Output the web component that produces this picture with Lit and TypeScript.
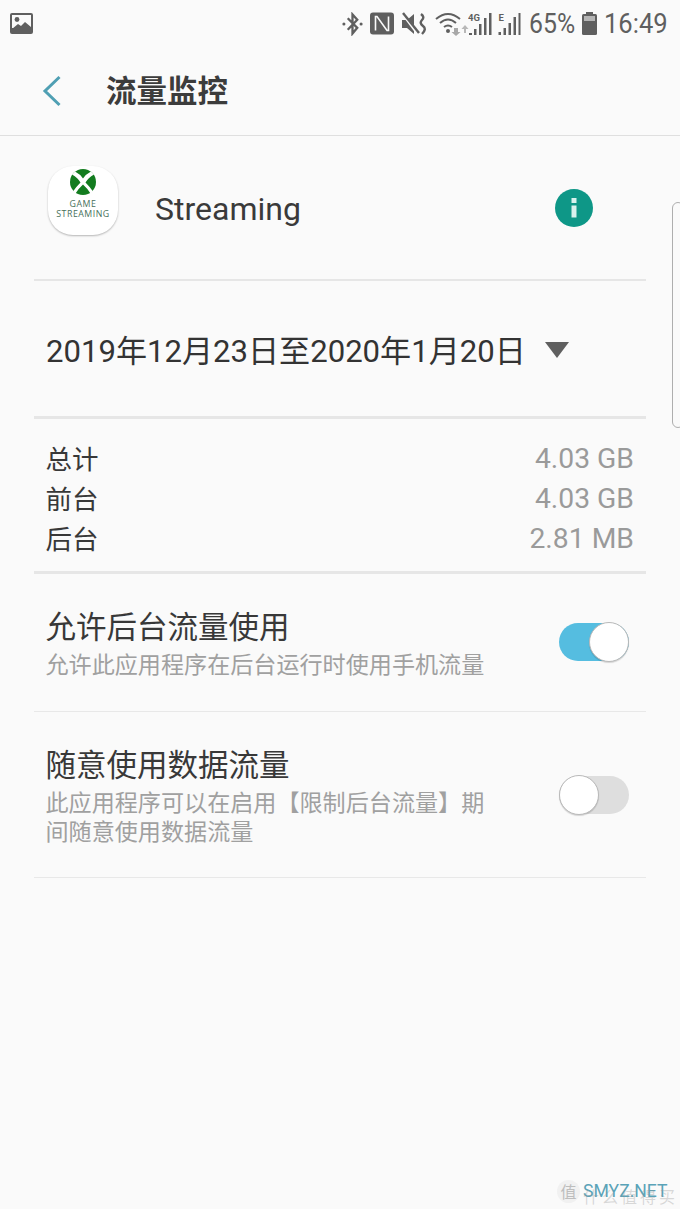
import { LitElement, html, css } from "lit";
import { customElement } from "lit/decorators.js";

@customElement("app-root")
export class AppRoot extends LitElement {
  static styles = css`
    :host { display: block; width: 680px; height: 1209px; background: #fafafa; position: relative; overflow: hidden;
      font-family: Roboto, "Noto Sans CJK SC", sans-serif; color: #333; }
    .status { height: 46px; display: flex; align-items: center; padding: 1px 14px 0 10px; box-sizing: border-box; color: #5f5f5f; }
    .status svg { display: block; flex: none; }
    .spacer { flex: 1; }
    .pct { font-size: 27px; margin-left: 8px; width: 45px; line-height: 46px; display: inline-block; transform: scaleX(.92); transform-origin: left; white-space: nowrap; }
    .bat { margin-left: 8px; }
    .time { font-size: 27.5px; margin-left: 7px; width: 62px; line-height: 46px; display: inline-block; transform: scaleX(.93); transform-origin: left; white-space: nowrap; }
    .icons { display: flex; align-items: center; }
    .head { height: 89px; border-bottom: 1px solid #dfdfdf; display: flex; align-items: center; padding-left: 42px; }
    .head h1 { margin: 0 0 4px 44px; font-size: 30.5px; font-weight: 700; color: #3c3c3c; }
    .body { padding: 0 34px; }
    .app { height: 145px; border-bottom: 2px solid #e6e6e6; display: flex; align-items: center; padding-left: 14px; box-sizing: border-box; }
    .tile { width: 70px; height: 69px; border-radius: 25px; background: #fff; box-shadow: 0 1px 2px rgba(0,0,0,.28); display: flex; flex-direction: column; align-items: center; margin-bottom: 15px; }
    .tile svg { margin-top: 3px; }
    .tile span { font-size: 8.8px; line-height: 10px; color: #47705a; letter-spacing: .5px; white-space: nowrap; font-family: "Open Sans", sans-serif; }
    .tile span:first-of-type { margin-top: 4px; }
    .name { margin-left: 37px; font-size: 32px; color: #3a3a3a; flex: 1; margin-top: 3px; }
    .info { width: 38px; height: 38px; border-radius: 50%; background: #0e9787; margin-right: 53px; display: flex; align-items: center; justify-content: center; margin-top: 1px; }
    .date { height: 138px; border-bottom: 3px solid #e6e6e6; display: flex; align-items: center; padding-left: 12px; box-sizing: border-box; font-size: 31.1px; color: #333; }
    .tri { width: 0; height: 0; border-left: 12.5px solid transparent; border-right: 12.5px solid transparent; border-top: 16px solid #5f5f5f; margin-left: 19px; margin-top: 2px; }
    .stats { padding: 19px 12px 13px 11.5px; border-bottom: 3px solid #e6e6e6; }
    .stat { height: 40px; display: flex; justify-content: space-between; align-items: center; font-size: 26.5px; color: #383838; }
    .stat span { margin-bottom: 2px; }
    .stat b { font-weight: 400; font-size: 28.3px; color: #9a9a9a; }
    .row { border-bottom: 1px solid #e8e8e8; display: flex; justify-content: space-between; padding: 0 17px 0 11.5px; box-sizing: border-box; }
    .row.a { height: 138px; padding-top: 34px; }
    .row.b { height: 166px; padding-top: 34px; }
    .t { font-size: 30.5px; line-height: 40px; color: #383838; }
    .s { font-size: 23.1px; line-height: 29px; color: #a0a0a0; width: 445px; margin-top: 3px; }
    .sw { width: 70px; height: 38px; border-radius: 19px; position: relative; margin-top: 15px; }
    .sw.on { background: #55bde0; }
    .sw.off { background: #dedede; margin-top: 30px; }
    .knob { position: absolute; top: -1px; width: 38px; height: 38px; border-radius: 50%; background: #fff; border: 1px solid #b9b9b9; box-shadow: 0 1px 1px rgba(0,0,0,.15); }
    .on .knob { right: 0; }
    .off .knob { left: 0; }
    .edge { position: absolute; left: 672px; top: 202px; width: 12px; height: 226px; border: 1px solid #aeaeae; border-radius: 8px; box-sizing: border-box; }
    .mark { position: absolute; left: 557px; top: 1179px; display: flex; align-items: center; }
    .mark i { width: 23px; height: 23px; border-radius: 50%; background: #f1f1f1; font-style: normal; font-size: 16px; color: #bdbdbd; display: flex; align-items: center; justify-content: center; }
    .mark span { font-size: 17.6px; color: #5aa3b8; margin-left: 3px; line-height: 24px; }
    .mark em { position: absolute; left: 26px; top: 5px; font-style: normal; font-size: 16px; letter-spacing: 3px; color: rgba(150,150,150,.35); white-space: nowrap; }
  `;

  private statusIcons() {
    return html`<div class="icons">
      <svg width="21" height="24" viewBox="0 0 22 24"><path d="M6 6l10 10-5 6V2l5 5.500L6 18" fill="none" stroke="#5f5f5f" stroke-width="2.400"/><circle cx="2" cy="12" r="1.600" fill="#5f5f5f"/><circle cx="20" cy="12" r="1.600" fill="#5f5f5f"/></svg>
      <svg style="margin-left:7px" width="24" height="23" viewBox="0 0 24 22"><rect width="24" height="22" rx="3" fill="#5f5f5f"/><path d="M5.500 18V4h1.500l10 14h1.500V4" fill="none" stroke="#fafafa" stroke-width="1.600"/></svg>
      <svg style="margin-left:7px" width="25" height="24" viewBox="0 0 25 24"><path d="M1 8h5l7-6v20l-7-6H1z" fill="#5f5f5f"/><path d="M2 2l15 20" stroke="#fafafa" stroke-width="3"/><path d="M2 1l16 20" stroke="#5f5f5f" stroke-width="2.400"/><path d="M20 2q4 3 1 6t1 6-1 8" fill="none" stroke="#5f5f5f" stroke-width="2.400"/></svg>
      <svg style="margin-left:9px" width="35" height="26" viewBox="0 0 35 26"><path d="M1 8q12-10 24 0M5 12q8-7 16 0M9 16q4-3 8 0" fill="none" stroke="#5f5f5f" stroke-width="2"/><circle cx="13" cy="20" r="2" fill="#5f5f5f"/><path d="M19 17h4v4h2.500l-4.500 4-4.500-4H19z" fill="#a8a8a8"/><path d="M29 22v-4h-2.500l3.500-4 3.500 4H31v4z" fill="#b8b8b8"/></svg>
      <svg style="margin-left:-2px" width="24" height="24" viewBox="0 0 24 24"><text x="0" y="9" font-size="9.500" font-weight="700" font-family="Roboto" fill="#5f5f5f">4G</text><path d="M1 23h3v-2H1zM6 23h2.500v-6H6zM11 23h2.500v-11H11zM16 23h2.500V6H16zM21 23h2.500V1H21z" fill="#5f5f5f"/></svg>
      <svg style="margin-left:6px" width="23" height="24" viewBox="0 0 22 24"><text x="0" y="9" font-size="9.500" font-weight="700" font-family="Roboto" fill="#5f5f5f">E</text><path d="M0 23h2.500v-3H0zM5 23h2.500v-7H5zM10 23h2.500V11H10zM15 23h2.500V5H15zM20 23h2V1h-2z" fill="#5f5f5f"/></svg>
    </div>`;
  }

  render() {
    return html`
      <div class="status">
        <svg width="23" height="22" viewBox="0 0 23 22"><rect width="23" height="21" rx="2" fill="#5f5f5f"/><rect x="2" y="2" width="19" height="13" fill="#fafafa"/><circle cx="7" cy="6.500" r="2.400" fill="#5f5f5f"/><path d="M2 16l6-5 3 2 4-4 6 5v3H2z" fill="#5f5f5f"/></svg>
        <div class="spacer"></div>
        ${this.statusIcons()}
        <span class="pct">65%</span>
        <svg class="bat" width="15" height="23" viewBox="0 0 15 23"><rect x="4" width="7" height="3" fill="#5f5f5f"/><rect y="2" width="15" height="21" rx="1.500" fill="#5f5f5f"/><rect x="2" y="4" width="11" height="5" fill="#b5b5b5"/></svg>
        <span class="time">16:49</span>
      </div>
      <div class="head">
        <svg width="20" height="32" viewBox="0 0 20 32"><path d="M17.500 2L3 16l14.500 14" fill="none" stroke="#4f9fb3" stroke-width="3"/></svg>
        <h1>流量监控</h1>
      </div>
      <div class="body">
        <div class="app">
          <div class="tile">
            <svg width="26" height="26" viewBox="0 0 26 26">
              <circle cx="13" cy="13" r="13" fill="#137c1f"/>
              <path d="M5 2.500Q10 5 13 9.500Q16 5 21 2.500L24 5.500Q18 9 15.500 13.500Q20 18 23 22.500L20.500 24.500Q17 19 13 15.500Q9 19 5.500 24.500L3 22.500Q6 18 10.500 13.500Q8 9 2 5.500Z" fill="#fff"/>
            </svg>
            <span>GAME</span><span>STREAMING</span>
          </div>
          <div class="name">Streaming</div>
          <div class="info"><svg width="6" height="20" viewBox="0 0 6 20"><rect x="0.500" width="5" height="5" fill="#d8f2ee"/><rect x="0.500" y="7.500" width="5" height="12" fill="#d8f2ee"/></svg></div>
        </div>
        <div class="date">2019年12月23日至2020年1月20日<span class="tri"></span></div>
        <div class="stats">
          <div class="stat"><span>总计</span><b>4.03 GB</b></div>
          <div class="stat"><span>前台</span><b>4.03 GB</b></div>
          <div class="stat"><span>后台</span><b>2.81 MB</b></div>
        </div>
        <div class="row a">
          <div><div class="t">允许后台流量使用</div><div class="s">允许此应用程序在后台运行时使用手机流量</div></div>
          <div class="sw on"><div class="knob"></div></div>
        </div>
        <div class="row b">
          <div><div class="t">随意使用数据流量</div><div class="s">此应用程序可以在启用【限制后台流量】期间随意使用数据流量</div></div>
          <div class="sw off"><div class="knob"></div></div>
        </div>
      </div>
      <div class="edge"></div>
      <div class="mark"><i>值</i><span>SMYZ.NET</span><em>什么值得买</em></div>
    `;
  }
}
